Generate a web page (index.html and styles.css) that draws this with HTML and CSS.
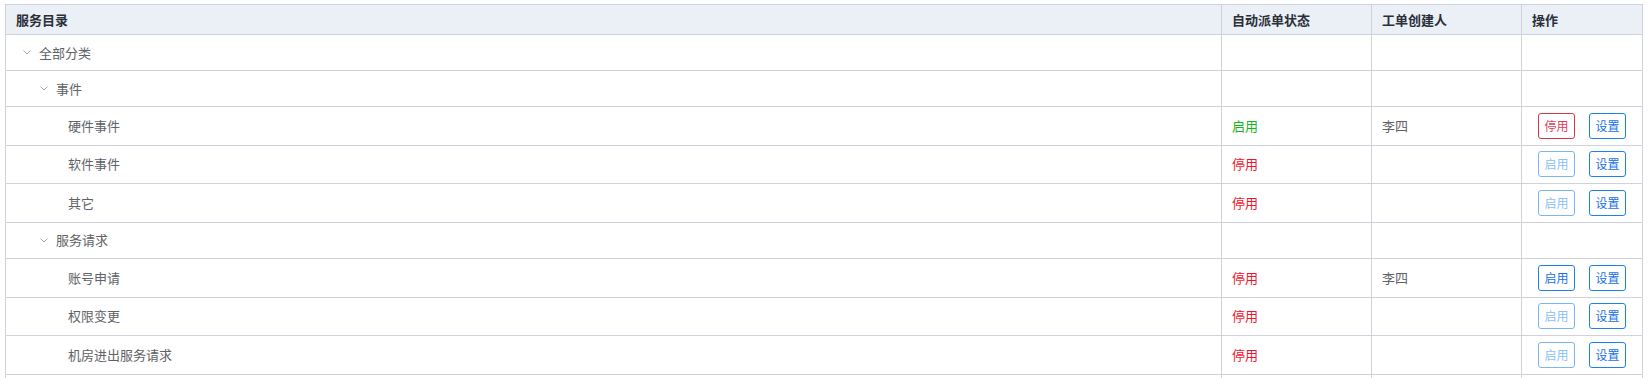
FILE: index.html
```html
<!DOCTYPE html>
<html lang="zh-CN">
<head>
<meta charset="utf-8">
<title>服务目录</title>
<link rel="stylesheet" href="styles.css">
</head>
<body>
<table class="tree-table">
  <colgroup>
    <col class="c-name"><col class="c-status"><col class="c-creator"><col class="c-op">
  </colgroup>
  <thead>
    <tr class="head-row"><th>服务目录</th><th>自动派单状态</th><th>工单创建人</th><th>操作</th></tr>
  </thead>
  <tbody>
    <tr class="cat-row"><td><div class="node lvl0"><svg class="chev" viewBox="0 0 8 5" width="8" height="5"><path d="M0.5 0.5 L4 4 L7.5 0.5" fill="none" stroke="#a0a3aa" stroke-width="1"/></svg>全部分类</div></td><td></td><td></td><td></td></tr>
    <tr class="cat-row"><td><div class="node lvl1"><svg class="chev" viewBox="0 0 8 5" width="8" height="5"><path d="M0.5 0.5 L4 4 L7.5 0.5" fill="none" stroke="#a0a3aa" stroke-width="1"/></svg>事件</div></td><td></td><td></td><td></td></tr>
    <tr class="item-row"><td><div class="node lvl2">硬件事件</div></td><td class="on">启用</td><td>李四</td><td class="ops"><button class="btn btn-stop">停用</button><button class="btn btn-set">设置</button></td></tr>
    <tr class="item-row"><td><div class="node lvl2">软件事件</div></td><td class="off">停用</td><td></td><td class="ops"><button class="btn btn-dis">启用</button><button class="btn btn-set">设置</button></td></tr>
    <tr class="item-row"><td><div class="node lvl2">其它</div></td><td class="off">停用</td><td></td><td class="ops"><button class="btn btn-dis">启用</button><button class="btn btn-set">设置</button></td></tr>
    <tr class="cat-row"><td><div class="node lvl1"><svg class="chev" viewBox="0 0 8 5" width="8" height="5"><path d="M0.5 0.5 L4 4 L7.5 0.5" fill="none" stroke="#a0a3aa" stroke-width="1"/></svg>服务请求</div></td><td></td><td></td><td></td></tr>
    <tr class="item-row"><td><div class="node lvl2">账号申请</div></td><td class="off">停用</td><td>李四</td><td class="ops"><button class="btn btn-start">启用</button><button class="btn btn-set">设置</button></td></tr>
    <tr class="item-row"><td><div class="node lvl2">权限变更</div></td><td class="off">停用</td><td></td><td class="ops"><button class="btn btn-dis">启用</button><button class="btn btn-set">设置</button></td></tr>
    <tr class="item-row"><td><div class="node lvl2">机房进出服务请求</div></td><td class="off">停用</td><td></td><td class="ops"><button class="btn btn-dis">启用</button><button class="btn btn-set">设置</button></td></tr>
    <tr class="item-row"><td></td><td></td><td></td><td></td></tr>
  </tbody>
</table>
</body>
</html>
```

FILE: styles.css
```css
html, body {
  margin: 0;
  padding: 0;
  background: #fff;
}
body {
  padding: 4px 0 0 5px;
  font-family: "Noto Sans CJK SC", "Noto Sans", sans-serif;
  font-size: 13px;
  color: #606266;
}
.tree-table {
  border-collapse: collapse;
  table-layout: fixed;
  width: 1637px;
}
.c-name { width: 1216px; }
.c-status { width: 150px; }
.c-creator { width: 150px; }
.c-op { width: 121px; }
.tree-table th,
.tree-table td {
  border: 1px solid #cfd2dc;
  padding: 0 0 0 10px;
  text-align: left;
  vertical-align: middle;
  white-space: nowrap;
  line-height: 16px;
}
.tree-table th {
  background: #ebeff6;
  color: #2b2f3a;
  font-weight: bold;
  font-size: 13px;
}
.head-row { height: 30px; }
.cat-row { height: 36px; }
.item-row { height: 38.67px; }
.node {
  display: flex;
  align-items: center;
  height: 16px;
}
.lvl0 { padding-left: 7px; }
.lvl1 { padding-left: 24px; }
.lvl2 { padding-left: 52px; }
.chev {
  margin-right: 8px;
  display: block;
  flex: none;
}
.on { color: #18b418; }
.off { color: #f2142c; }
.tree-table td.ops {
  padding: 0;
  text-align: center;
}
.btn {
  width: 37px;
  height: 26px;
  padding: 0;
  margin: 0 7px;
  background: #fff;
  border: 1px solid #1a82f0;
  border-radius: 3px;
  font-family: "Noto Sans CJK SC", "Noto Sans", sans-serif;
  font-size: 12px;
  line-height: 24px;
  vertical-align: middle;
  cursor: pointer;
}
.btn-set { color: #1b6fe3; border-color: #1a82f0; }
.btn-start { color: #1b6fe3; border-color: #1a82f0; }
.btn-stop { color: #e0405a; border-color: #dc3545; }
.btn-dis { color: #8cc0f5; border-color: #78b6f5; }
```
